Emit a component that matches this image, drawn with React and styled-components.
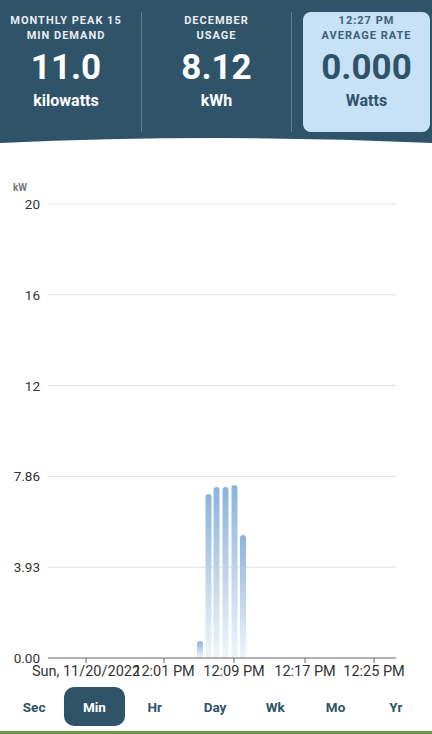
import styled, { createGlobalStyle } from 'styled-components'

const GlobalStyle = createGlobalStyle`
  html, body { margin: 0; padding: 0; background: #fff; }
  body { font-family: Roboto, "Noto Sans", Arial, sans-serif; overflow: hidden; }
`

const stats = [
    { label: ['MONTHLY PEAK 15', 'MIN DEMAND'], value: '11.0', unit: 'kilowatts' },
    { label: ['DECEMBER', 'USAGE'], value: '8.12', unit: 'kWh' },
    { label: ['12:27 PM', 'AVERAGE RATE'], value: '0.000', unit: 'Watts', active: true },
]

const yLabels = ['20', '16', '12', '7.86', '3.93', '0.00']
const xTicks = [
    { x: 86, label: 'Sun, 11/20/2022' },
    { x: 164, label: '12:01 PM' },
    { x: 234, label: '12:09 PM' },
    { x: 305, label: '12:17 PM' },
    { x: 374, label: '12:25 PM' },
]
const bars = [
    { x: 200, top: 641 },
    { x: 208.5, top: 494 },
    { x: 216.5, top: 487 },
    { x: 225.5, top: 487 },
    { x: 234.5, top: 485 },
    { x: 243, top: 535 },
]
const tabs = ['Sec', 'Min', 'Hr', 'Day', 'Wk', 'Mo', 'Yr']

// chart svg starts at page y=176
const OFF = 176

export default function App() {
    return (
        <Page>
            <GlobalStyle />
            <Header>
                {stats.map((s, i) => (
                    <HeaderItem key={i} $first={i === 0} $active={s.active} $divider={i > 0 && !s.active}>
                        <Label>{s.label[0]}<br />{s.label[1]}</Label>
                        <Value>{s.value}</Value>
                        <Unit>{s.unit}</Unit>
                    </HeaderItem>
                ))}
            </Header>
            <Wave viewBox="0 0 432 6" preserveAspectRatio="none">
                <path d="M0 0 H432 V5 Q216 -5 0 5 Z" fill="#2f5369" />
            </Wave>
            <Chart viewBox={`0 ${OFF} 432 508`}>
                <defs>
                    <linearGradient id="bar" x1="0" y1="0" x2="0" y2="1">
                        <stop offset="0" stopColor="#8cb3dc" />
                        <stop offset="1" stopColor="#f0f5fb" />
                    </linearGradient>
                </defs>
                <text x="13" y="191" fontSize="10" fontWeight="700" fill="#777">kW</text>
                {yLabels.map((l, i) => {
                    const y = 204 + i * 90.8
                    return (
                        <g key={l}>
                            <text x="40" y={y + 5} fontSize="13.5" fill="#333" textAnchor="end">{l}</text>
                            {i < 5 && <line x1="48" x2="396" y1={y} y2={y} stroke="#e2e2e2" strokeWidth="1" />}
                        </g>
                    )
                })}
                {bars.map((b, i) => (
                    <path
                        key={i}
                        d={`M${b.x - 3} 658 V${b.top + 3} A3 3 0 0 1 ${b.x + 3} ${b.top + 3} V658 Z`}
                        fill="url(#bar)"
                    />
                ))}
                <line x1="48" x2="396" y1="658" y2="658" stroke="#666" strokeWidth="1" />
                {xTicks.map(t => (
                    <g key={t.label}>
                        <line x1={t.x} x2={t.x} y1="658" y2="663" stroke="#666" strokeWidth="1" />
                        <text x={t.x} y="676" fontSize="14.5" fill="#333" textAnchor="middle">{t.label}</text>
                    </g>
                ))}
            </Chart>
            <Tabs>
                {tabs.map(t => (
                    <Tab key={t} $active={t === 'Min'}>{t}</Tab>
                ))}
            </Tabs>
            <Footer />
        </Page>
    )
}

const Page = styled.div`
display: flex;
flex-direction: column;
width: 432px;
height: 734px;
`

const Header = styled.div`
display: flex;
background: #2f5369;
height: 138px;
padding: 12px 2px 0 0;
box-sizing: border-box;
`

const HeaderItem = styled.div`
box-sizing: border-box;
display: flex;
flex-direction: column;
align-items: center;
height: 120px;
width: ${p => p.$first ? '132px' : p.$active ? '127px' : '150px'};
margin-right: ${p => p.$first ? '9px' : '0'};
margin-left: ${p => p.$active ? '12px' : '0'};
border-left: ${p => p.$divider ? '1px solid #5d7c90' : 'none'};
position: relative;
background: ${p => p.$active ? '#c7e1f6' : 'transparent'};
border-radius: ${p => p.$active ? '8px' : '0'};
color: ${p => p.$active ? '#2f5369' : '#fff'};
${p => p.$active ? '&::before { content: ""; position: absolute; left: -12px; top: 0; bottom: 0; border-left: 1px solid #5d7c90; }' : ''}
`

const Label = styled.div`
font-size: 11px;
line-height: 15px;
font-weight: 700;
letter-spacing: 1px;
text-align: center;
margin-top: 1px;
opacity: 0.9;
`

const Value = styled.div`
font-size: 35px;
line-height: 40px;
font-weight: 700;
margin-top: 5px;
`

const Unit = styled.div`
font-size: 16px;
line-height: 20px;
font-weight: 700;
margin-top: 3px;
`

const Wave = styled.svg`
display: block;
width: 432px;
height: 6px;
`

const Chart = styled.svg`
display: block;
width: 432px;
height: 508px;
margin-top: 32px;
font-family: Roboto, Arial, sans-serif;
`

const Tabs = styled.div`
display: grid;
grid-template-columns: repeat(7, 1fr);
padding: 0 6px 0 4px;
margin-top: 3px;
height: 39px;
`

const Tab = styled.div`
display: flex;
align-items: center;
justify-content: center;
border-radius: 10px;
font-size: 13.5px;
font-weight: 700;
color: ${p => p.$active ? '#fff' : '#2f5369'};
background: ${p => p.$active ? '#2f5369' : 'transparent'};
`

const Footer = styled.div`
margin-top: auto;
height: 3px;
background: #6b9a47;
`
